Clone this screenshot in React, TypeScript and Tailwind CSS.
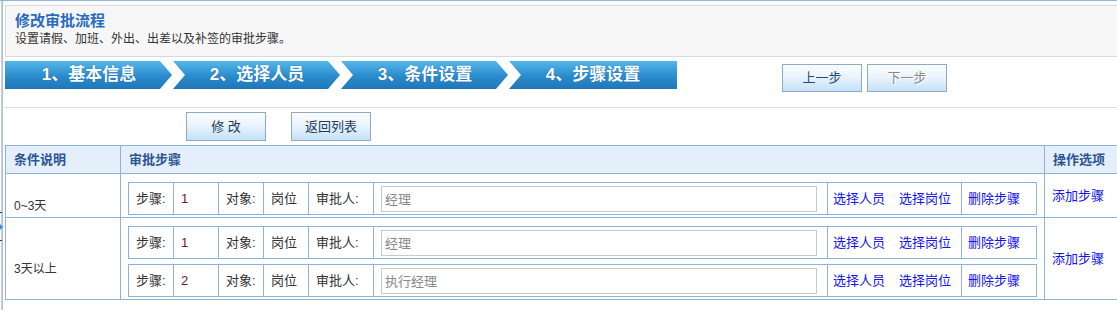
import React from "react";

const steps = [
  { label: "1、基本信息", clip: "[clip-path:polygon(0_0,155px_0,167px_50%,155px_100%,0_100%)]" },
  { label: "2、选择人员", clip: "[clip-path:polygon(0_0,155px_0,167px_50%,155px_100%,0_100%,12px_50%)]" },
  { label: "3、条件设置", clip: "[clip-path:polygon(0_0,155px_0,167px_50%,155px_100%,0_100%,12px_50%)]" },
  { label: "4、步骤设置", clip: "[clip-path:polygon(0_0,100%_0,100%_100%,0_100%,12px_50%)]" },
];

function StepBox({ no, approver }: { no: string; approver: string }) {
  const cell = "flex items-center border-r border-[#8db3d8] pl-[7px]";
  return (
    <div className="grid h-[33px] grid-cols-[45px_45px_45px_45px_65px_454px_134px_75px] border-y border-l border-[#8db3d8] text-[13px] text-[#333]">
      <div className={cell}>步骤:</div>
      <div className={cell + " text-[#6a1a3a]"}>{no}</div>
      <div className={cell}>对象:</div>
      <div className={cell}>岗位</div>
      <div className={cell}>审批人:</div>
      <div className={cell}>
        <input
          readOnly
          value={approver}
          className="h-[26px] w-[436px] border border-[#c9c9c9] bg-white px-[3px] text-[13px] text-[#8a8a8a] outline-none"
        />
      </div>
      <div className={cell + " gap-[14px] !pl-[5px] text-[#1212f5]"}>
        <span>选择人员</span>
        <span>选择岗位</span>
      </div>
      <div className={cell + " !pl-[6px] text-[#1212f5]"}>删除步骤</div>
    </div>
  );
}

function Btn({ children, disabled }: { children: React.ReactNode; disabled?: boolean }) {
  return (
    <div
      className={
        "flex h-[28px] w-[80px] items-center justify-center border border-[#8eaac8] bg-[linear-gradient(to_bottom,#fbfdff,#eaf4fd_45%,#c4e1f7)] text-[13px] " +
        (disabled ? "text-[#8a8a8a] [text-shadow:1px_1px_0_#fff]" : "text-[#1e4a7a]")
      }
    >
      {children}
    </div>
  );
}

export default function App() {
  return (
    <div className="relative h-[310px] w-[1117px] overflow-hidden bg-white font-['Liberation_Sans','Noto_Sans_CJK_SC',sans-serif]">
      <div className="h-px bg-[#8eb4dc]" />
      <div className="flex h-[309px]">
        <div className="w-px" />
        <div className="w-px bg-[#c9cfd8]" />
        <div className="w-px bg-[#a9c3df]" />
        <div className="w-[2px]" />
        <div className="min-w-0 flex-1 pt-[4px]">
          {/* header box */}
          <div className="h-[52px] border-y border-l border-[#d5dae3] bg-[#f7f7f7] pl-[9px] pt-[5px]">
            <div className="text-[15px] font-bold leading-[20px] text-[#2a6bc2]">修改审批流程</div>
            <div className="text-[12px] leading-[16px] text-[#333]">设置请假、加班、外出、出差以及补签的审批步骤。</div>
          </div>

          {/* steps row */}
          <div className="mt-[4px] flex h-[46px] items-start">
            <div className="flex">
              {steps.map((s) => (
                <div
                  key={s.label}
                  className={
                    "flex h-[28px] w-[168px] items-center justify-center bg-[linear-gradient(to_bottom,#54b8eb,#2a8bcc_55%,#1f77b9)] text-[17px] font-bold text-white [text-shadow:0_0_1px_#1a5f96] " +
                    s.clip
                  }
                >
                  {s.label}
                </div>
              ))}
            </div>
            <div className="ml-[105px] mt-[3px] flex gap-[5px]">
              <Btn>上一步</Btn>
              <Btn disabled>下一步</Btn>
            </div>
          </div>
          <div className="h-px bg-[#e1e1e1]" />

          {/* action buttons */}
          <div className="flex gap-[25px] pl-[181px] pt-[4px]">
            <div className="flex h-[29px] w-[80px] items-center justify-center border border-[#8eaac8] bg-[linear-gradient(to_bottom,#fbfdff,#eaf4fd_45%,#c4e1f7)] text-[13px] text-[#1e3a5e]">
              修&nbsp;改
            </div>
            <div className="flex h-[29px] w-[80px] items-center justify-center border border-[#8eaac8] bg-[linear-gradient(to_bottom,#fbfdff,#eaf4fd_45%,#c4e1f7)] text-[13px] text-[#1e3a5e]">
              返回列表
            </div>
          </div>

          {/* table */}
          <div className="mt-[4px] grid w-[1130px] grid-cols-[115px_924px_1fr] border-l border-t border-[#8db3d8]">
            <div className="flex h-[28px] items-center border-b border-r border-[#8db3d8] bg-[#e5effb] px-[8px] text-[13px] font-bold text-[#2d5593]">条件说明</div>
            <div className="flex h-[28px] items-center border-b border-r border-[#8db3d8] bg-[#e5effb] px-[8px] text-[13px] font-bold text-[#2d5593]">审批步骤</div>
            <div className="flex h-[28px] items-center border-b border-r border-[#8db3d8] bg-[#e5effb] px-[8px] text-[13px] font-bold text-[#2d5593]">操作选项</div>

            <div className="flex items-center border-b border-r border-[#8db3d8] pl-[8px] pt-[20px] text-[12px] text-[#333]">0~3天</div>
            <div className="flex flex-col gap-[5px] border-b border-r border-[#8db3d8] px-[7px] pb-[2px] pt-[8px]">
              <StepBox no="1" approver="经理" />
            </div>
            <div className="flex items-center border-b border-r border-[#8db3d8] pl-[7px] text-[13px] text-[#1212f5]">添加步骤</div>

            <div className="flex items-center border-b border-r border-[#8db3d8] pl-[8px] pt-[20px] text-[12px] text-[#333]">3天以上</div>
            <div className="flex flex-col gap-[5px] border-b border-r border-[#8db3d8] px-[7px] pb-[2px] pt-[8px]">
              <StepBox no="1" approver="经理" />
              <StepBox no="2" approver="执行经理" />
            </div>
            <div className="flex items-center border-b border-r border-[#8db3d8] pl-[7px] text-[13px] text-[#1212f5]">添加步骤</div>
          </div>
        </div>
      </div>

      {/* splitter marks on the left edge */}
      <div className="absolute left-0 top-[212px] h-px w-[2px] bg-[#333]" />
      <div className="absolute left-0 top-[224px] h-0 w-0 border-y-[3px] border-l-[3px] border-y-transparent border-l-[#3a8ee0]" />
      <div className="absolute left-0 top-[240px] h-px w-[2px] bg-[#333]" />
    </div>
  );
}
